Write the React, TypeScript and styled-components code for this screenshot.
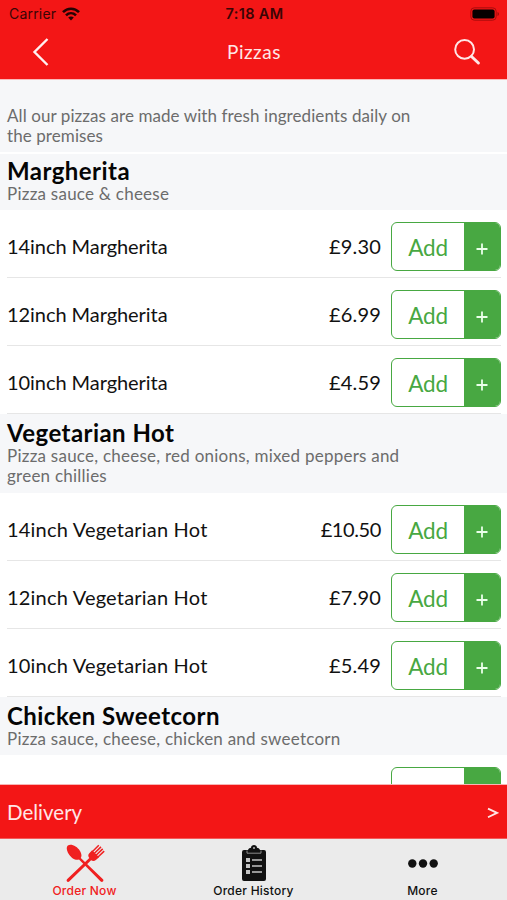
import React from 'react';
import styled, { createGlobalStyle } from 'styled-components';

const GlobalStyle = createGlobalStyle`
  * { box-sizing: border-box; }
  body { margin: 0; background: #fff; }
`;

const RED = '#f31616';
const GREEN = '#48a842';

const Screen = styled.div`
  width: 507px;
  height: 900px;
  display: flex;
  flex-direction: column;
  overflow: hidden;
  background: #fff;
  color: #111;
  font-family: Lato, 'Open Sans', sans-serif;
`;

const StatusBar = styled.div`
  height: 26px;
  flex: none;
  display: grid;
  grid-template-columns: 1fr auto 1fr;
  align-items: center;
  padding: 1px 7px 0 9px;
  background: ${RED};
  color: #3a0505;
  font-family: Inter, sans-serif;
  font-size: 14px;
  letter-spacing: 0.2px;
`;

const Carrier = styled.div`
  display: flex;
  align-items: center;
  gap: 6px;
`;

const Clock = styled.div`
  font-size: 14.5px;
  font-weight: 600;
  letter-spacing: 0.35px;
`;

const Battery = styled.svg`
  justify-self: end;
`;

const NavBar = styled.header`
  height: 53px;
  flex: none;
  display: grid;
  grid-template-columns: 1fr auto 1fr;
  align-items: center;
  padding: 0 26px 1px 31px;
  background: ${RED};
  color: #ffe6e6;
`;

const Title = styled.h1`
  margin: -2px 0 0 -4px;
  font-size: 19px;
  font-weight: 400;
  letter-spacing: 0.5px;
`;

const SearchIcon = styled.svg`
  justify-self: end;
`;

const Menu = styled.main`
  flex: 1;
  min-height: 0;
  overflow: hidden;
`;

const Notice = styled.p`
  margin: 0 0 2px;
  height: 73px;
  padding: 26px 80px 0 7px;
  border-top: 1px solid #fbb9b9;
  background: #f6f7f9;
  color: #6c6c6c;
  font-size: 17px;
  line-height: 20px;
  letter-spacing: 0.08px;
`;

const SectionHead = styled.div<{ $height: number; $top: number }>`
  height: ${(p) => p.$height}px;
  padding: ${(p) => p.$top}px 80px 0 7px;
  background: #f6f7f9;
`;

const SectionTitle = styled.h2`
  margin: 0;
  font-size: 24px;
  line-height: 25px;
  font-weight: 700;
  color: #050505;
  letter-spacing: 0.45px;
`;

const SectionText = styled.p`
  margin: 0;
  padding-top: 0.5px;
  color: #6c6c6c;
  font-size: 17px;
  line-height: 20px;
  letter-spacing: 0.24px;
`;

const Row = styled.div`
  height: 68px;
  margin: 0 6px 0 7px;
  display: flex;
  align-items: center;
  border-bottom: 1px solid #e6e6e6;
  font-size: 20px;
  padding-top: 6px;
`;

const Name = styled.span<{ $spacing: number }>`
  flex: 1;
  margin-top: -2px;
  letter-spacing: ${(p) => p.$spacing}px;
`;

const Price = styled.span<{ $long: boolean }>`
  margin: -2px 10px 0 0;
  letter-spacing: ${(p) => (p.$long ? -0.4 : 0.2)}px;
`;

const AddButton = styled.button`
  width: 110px;
  height: 49px;
  padding: 0;
  display: flex;
  overflow: hidden;
  border: 1px solid ${GREEN};
  border-radius: 6px;
  background: #fff;
  font-family: inherit;
`;

const AddLabel = styled.span`
  flex: 1;
  line-height: 49px;
  font-size: 22.5px;
  letter-spacing: -0.2px;
  color: ${GREEN};
`;

const Plus = styled.span`
  width: 36px;
  display: flex;
  align-items: center;
  justify-content: center;
  padding-top: 4px;
  background: ${GREEN};
`;

const Delivery = styled.div`
  height: 55px;
  flex: none;
  display: flex;
  align-items: center;
  justify-content: space-between;
  padding: 0 8px 0 7px;
  border-top: 1px solid #f8b4b4;
  border-bottom: 1px solid #f25a5a;
  background: ${RED};
  color: #ffe6e6;
  font-size: 20.5px;
`;

const Tabs = styled.nav`
  height: 61px;
  flex: none;
  display: grid;
  grid-template-columns: repeat(3, 1fr);
  background: #ebebeb;
`;

const Tab = styled.div<{ $active?: boolean }>`
  display: flex;
  flex-direction: column;
  align-items: center;
  color: ${(p) => (p.$active ? '#f02020' : '#111')};
  font-family: Inter, sans-serif;
  font-size: 12px;
  line-height: 14px;
  font-weight: 500;
  letter-spacing: 0.25px;
`;

const TabIcon = styled.svg`
  margin: 5px 0 1px;
  fill: currentColor;
`;

type Section = {
  title: string;
  text: string;
  height: number;
  top: number;
  spacing: number;
  items: [string, string][];
};

const sections: Section[] = [
  {
    title: 'Margherita', text: 'Pizza sauce & cheese', height: 56, top: 4, spacing: -0.06,
    items: [['14inch Margherita', '£9.30'], ['12inch Margherita', '£6.99'], ['10inch Margherita', '£4.59']],
  },
  {
    title: 'Vegetarian Hot', text: 'Pizza sauce, cheese, red onions, mixed peppers and green chillies', height: 79, top: 6, spacing: 0.2,
    items: [['14inch Vegetarian Hot', '£10.50'], ['12inch Vegetarian Hot', '£7.90'], ['10inch Vegetarian Hot', '£5.49']],
  },
  {
    title: 'Chicken Sweetcorn', text: 'Pizza sauce, cheese, chicken and sweetcorn', height: 58, top: 6, spacing: 0.2,
    items: [['14inch Chicken Sweetcorn', '£10.50']],
  },
];

export default function App() {
  return (
    <Screen>
      <GlobalStyle />
      <StatusBar>
        <Carrier>
          Carrier
          <svg width="18" height="14" viewBox="0 0 18 14" fill="none" stroke="#250303" strokeWidth="2.6">
            <path d="M1 5.2C5.5.6 12.5.6 17 5.2" />
            <path d="M4 8.4c2.9-2.8 7.1-2.8 10 0" />
            <path d="M6.2 10.6c1.6-1.5 4-1.5 5.6 0L9 13.4z" fill="#250303" stroke="none" />
          </svg>
        </Carrier>
        <Clock>7:18 AM</Clock>
        <Battery width="30" height="14" viewBox="0 0 30 14">
          <rect x="0.8" y="0.8" width="25.4" height="12.4" rx="3.5" fill="none" stroke="#a80d0d" />
          <rect x="2.4" y="2.4" width="22.2" height="9.2" rx="2" fill="#050000" />
          <path d="M27.6 5v4c1.6-.6 1.6-3.4 0-4z" fill="#8a0909" />
        </Battery>
      </StatusBar>
      <NavBar>
        <svg width="20" height="30" viewBox="0 0 20 30" fill="none" stroke="#fff0f0" strokeWidth="2.4">
          <path d="M16.5 2 3.5 15l13 13" />
        </svg>
        <Title>Pizzas</Title>
        <SearchIcon width="28" height="28" viewBox="0 0 28 28" fill="none" stroke="#ffe6e6">
          <circle cx="11.6" cy="11.4" r="9.4" strokeWidth="2" />
          <path d="m18.5 18.5 6.900 6.500" strokeWidth="3" strokeLinecap="round" />
        </SearchIcon>
      </NavBar>
      <Menu>
        <Notice>All our pizzas are made with fresh ingredients daily on the premises</Notice>
        {sections.map((s) => (
          <section key={s.title}>
            <SectionHead $height={s.height} $top={s.top}>
              <SectionTitle>{s.title}</SectionTitle>
              <SectionText>{s.text}</SectionText>
            </SectionHead>
            {s.items.map(([name, price]) => (
              <Row key={name}>
                <Name $spacing={s.spacing}>{name}</Name>
                <Price $long={price.length > 5}>{price}</Price>
                <AddButton>
                  <AddLabel>Add</AddLabel>
                  <Plus>
                    <svg width="12" height="12" viewBox="0 0 12 12" stroke="#eaffea" strokeWidth="1.8">
                      <path d="M6 .5v11M.5 6h11" />
                    </svg>
                  </Plus>
                </AddButton>
              </Row>
            ))}
          </section>
        ))}
      </Menu>
      <Delivery>
        <span>Delivery</span>
        <svg width="12" height="12" viewBox="0 0 12 12" fill="none" stroke="#ffe6e6" strokeWidth="1.8">
          <path d="M1 2.600 10 6.900 1 11.200" />
        </svg>
      </Delivery>
      <Tabs>
        <Tab $active>
          <TabIcon width="40" height="39" viewBox="0 0 40 39">
            <path d="M2.800 1.500C6-.6 12 2 15 7c1.900 3.200 1.700 5.500.8 7L38 35.300c1.300 1.500-.8 3.700-2.300 2.300L14 15.400c-2 .8-5 .2-7.600-2.200C2 9.200.5 3.500 2.800 1.500z" />
            <path d="M2 35.300 24.300 14c-1.200-1.600-1.400-3.100-.2-4.500l3-3.300 7 7-3.200 2.700c-1.600 1.300-3.200 1.200-4.800.3L4.200 37.600C2.700 39 .7 36.800 2 35.300z" />
            <path d="M27.300 7.700 33.800 1.200M29.200 9.500 36 2.900M31.100 11.300 37.700 4.900M33 13 39.200 7.100" fill="none" stroke="currentColor" strokeWidth="1.500" />
          </TabIcon>
          Order Now
        </Tab>
        <Tab>
          <TabIcon width="26" height="39" viewBox="0 0 26 39">
            <path d="M3 6h4c.5-2 2-2 3-2.300C10 0 16 0 16 3.700c1 .3 2.500.3 3 2.300h4a2 2 0 0 1 2 2v27a2 2 0 0 1-2 2H3a2 2 0 0 1-2-2V8a2 2 0 0 1 2-2z" />
            <path d="M6 6.500v2.700h14V6.500" fill="none" stroke="#aaa" strokeWidth=".8" />
            <circle cx="13" cy="4" r="1.100" fill="#aaa" />
            <path d="M5 14h4v4H5zM5 20h4v4H5zM5 26h4v4H5zM11 15.300h10v1.500H11zM11 21.300h10v1.500H11zM11 27.300h10v1.500H11z" fill="#c4c4c4" />
          </TabIcon>
          Order History
        </Tab>
        <Tab>
          <TabIcon width="32" height="39" viewBox="0 0 32 39">
            <circle cx="5.300" cy="19.500" r="4.200" />
            <circle cx="16" cy="19.500" r="4.200" />
            <circle cx="26.700" cy="19.500" r="4.200" />
          </TabIcon>
          More
        </Tab>
      </Tabs>
    </Screen>
  );
}
